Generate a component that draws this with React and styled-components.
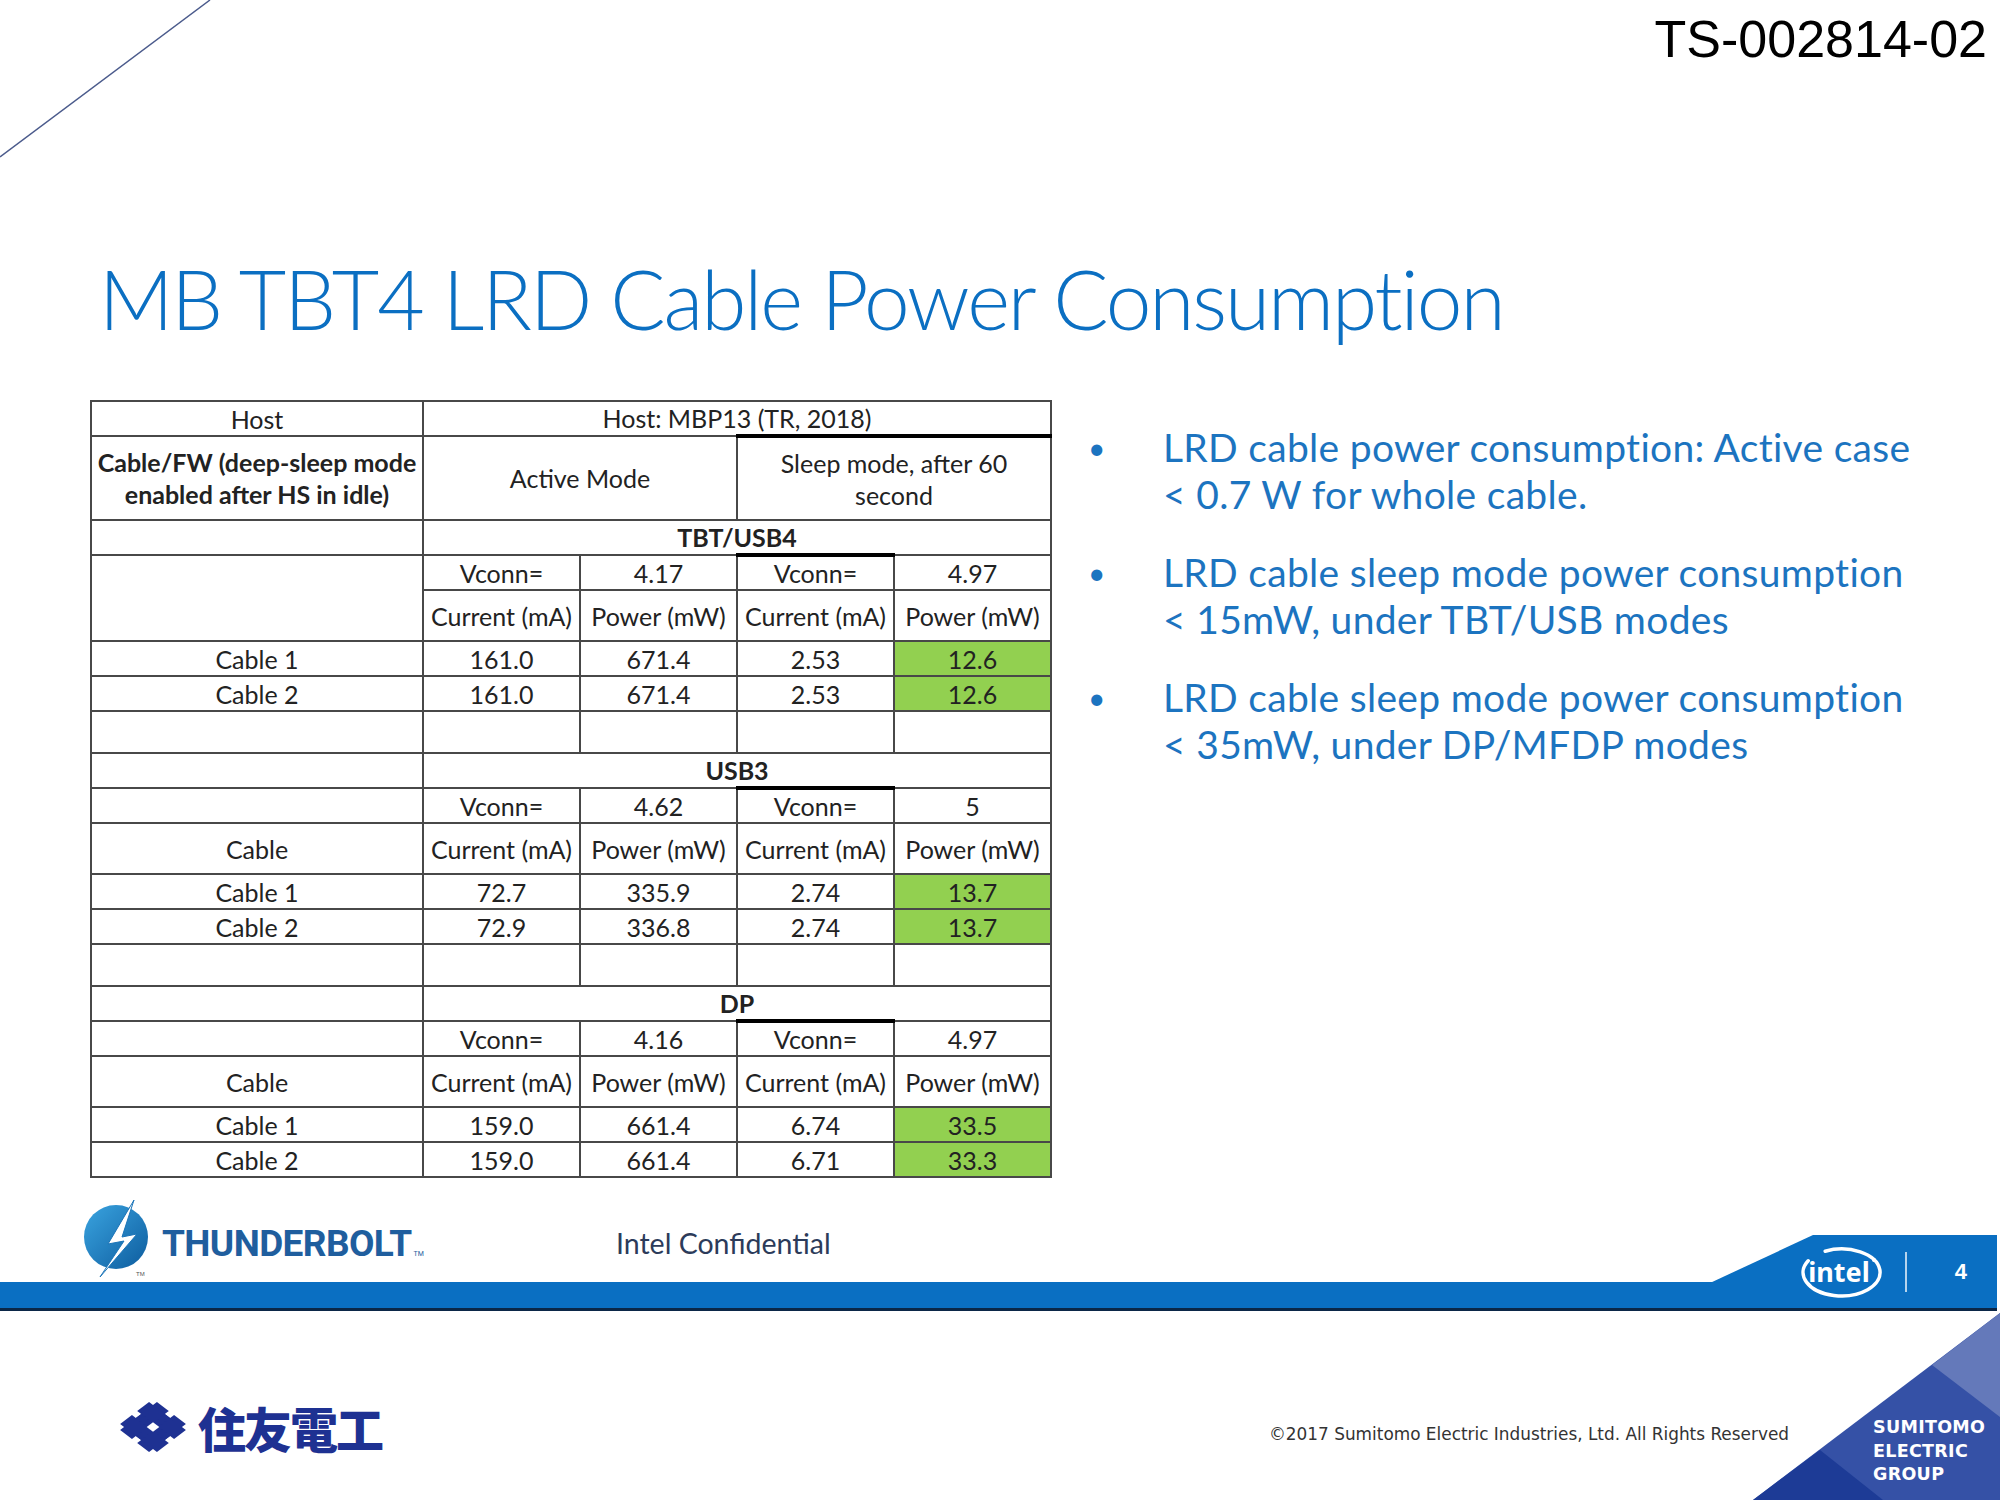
import React from 'react';
import styled, { createGlobalStyle } from 'styled-components';

const GlobalStyle = createGlobalStyle`
  html, body {
    margin: 0;
    padding: 0;
    background: #fff;
  }
`;

const Slide = styled.div`
  width: 2000px;
  height: 1500px;
  position: relative;
  overflow: hidden;
  background: #fff;
  display: flex;
  flex-direction: column;
  font-family: Lato, 'Noto Sans', sans-serif;
`;

const CornerLine = styled.svg`
  position: absolute;
  top: 0;
  left: 0;
`;

const DocNumber = styled.div`
  align-self: flex-end;
  margin: 13px 13px 0 0;
  font-family: 'Liberation Sans', Arial, sans-serif;
  font-size: 52px;
  line-height: 1;
  color: #000;
`;

const Title = styled.h1`
  margin: 192px 0 0 99px;
  font-family: Lato, sans-serif;
  font-weight: 300;
  font-size: 82px;
  letter-spacing: -2.1px;
  font-variant-ligatures: none;
  line-height: 1;
  color: #0b6fc2;
  white-space: nowrap;
`;

const Main = styled.main`
  display: flex;
  align-items: flex-start;
  gap: 36px;
  margin-top: 61px;
  padding-left: 90px;
`;

const Table = styled.table`
  border-collapse: collapse;
  table-layout: fixed;
  width: 960px;
  font-family: Lato, sans-serif;
  font-size: 25px;
  color: #222;
`;

const Row = styled.tr`
  height: ${(p) => p.$h}px;
`;

const Cell = styled.td`
  border: 2px solid #484848;
  ${(p) => p.$thickTop && 'border-top: 4px solid #000;'}
  background: ${(p) => (p.$green ? '#92d050' : '#fff')};
  font-weight: ${(p) => (p.$bold ? 700 : 400)};
  text-align: center;
  vertical-align: middle;
  padding: 0;
  line-height: 32px;
  white-space: nowrap;
  overflow: hidden;
`;

const Bullets = styled.ul`
  list-style: none;
  margin: 0;
  padding: 24px 0 0;
  display: flex;
  flex-direction: column;
  gap: 32px;
`;

const Bullet = styled.li`
  display: flex;
  font-family: Lato, sans-serif;
  font-size: 39px;
  line-height: 46.5px;
  letter-spacing: 0.3px;
  color: #1c74c0;
`;

const Dot = styled.span`
  flex: 0 0 75px;
  font-size: 30px;
`;

const Lines = styled.span`
  display: flex;
  flex-direction: column;
  white-space: nowrap;
`;

const Footer = styled.footer`
  position: relative;
  height: 114px;
  margin-top: 20px;
  padding-left: 80px;
  display: flex;
  align-items: flex-start;

  &::before {
    content: '';
    position: absolute;
    left: 0;
    right: 3px;
    top: 84px;
    height: 26px;
    background: #0a6fc2;
    border-bottom: 3px solid #0b2747;
  }

  &::after {
    content: '';
    position: absolute;
    right: 3px;
    top: 37px;
    width: 287px;
    height: 48px;
    background: #0a6fc2;
    clip-path: polygon(0 100%, 103px 0, 100% 0, 100% 100%);
  }
`;

const Brand = styled.div`
  flex: 0 0 536px;
  display: flex;
  align-items: center;
  gap: 10px;
`;

const BrandName = styled.span`
  margin-top: 8px;
  font-family: Roboto, 'Liberation Sans', sans-serif;
  font-weight: 700;
  font-size: 37px;
  letter-spacing: -0.6px;
  color: #1f5e9e;

  sup {
    font-size: 7px;
    font-weight: 400;
    letter-spacing: 0;
    vertical-align: baseline;
    margin-left: 2px;
  }
`;

const Confidential = styled.span`
  margin-top: 31px;
  font-family: Lato, sans-serif;
  font-size: 28.5px;
  line-height: 1;
  color: #2c3b5a;
`;

const IntelGroup = styled.div`
  position: relative;
  z-index: 1;
  margin: 41px 0 0 auto;
  padding-right: 33px;
  height: 65px;
  display: flex;
  align-items: center;
`;

const Divider = styled.span`
  width: 2px;
  height: 40px;
  margin-left: 15px;
  background: rgba(255, 255, 255, 0.7);
`;

const PageNum = styled.span`
  margin-left: 48px;
  font-family: 'Liberation Sans', Arial, sans-serif;
  font-weight: 700;
  font-size: 22px;
  color: #fff;
`;

const Bottom = styled.section`
  position: relative;
  flex: 1;
  display: flex;
  align-items: flex-start;
`;

const SumitomoLogo = styled.div`
  display: flex;
  align-items: center;
  gap: 12px;
  margin: 88px 0 0 120px;
`;

const SumitomoName = styled.span`
  font-family: 'Noto Sans CJK JP', 'Noto Sans CJK SC', sans-serif;
  font-weight: 900;
  font-size: 48px;
  line-height: 54px;
  letter-spacing: -2px;
  color: #1e3192;
`;

const Copyright = styled.span`
  margin: 112px 211px 0 auto;
  font-family: 'DejaVu Sans', Verdana, sans-serif;
  font-size: 16.9px;
  line-height: 20px;
  color: #333;
`;

const GroupBadge = styled.div`
  position: absolute;
  right: 0;
  bottom: 0;
  width: 247px;
  height: 187px;
  box-sizing: border-box;
  padding: 103px 0 0 120px;
  display: flex;
  flex-direction: column;
  font-family: 'DejaVu Sans', Verdana, sans-serif;
  font-weight: 700;
  font-size: 17.5px;
  line-height: 23.5px;
  color: #fff;
  letter-spacing: 0.3px;

  svg {
    position: absolute;
    inset: 0;
    z-index: 0;
  }

  span {
    position: relative;
  }
`;

const sections = [
  {
    name: 'TBT/USB4',
    vconn: ['4.17', '4.97'],
    label: null,
    rows: [
      ['Cable 1', '161.0', '671.4', '2.53', '12.6'],
      ['Cable 2', '161.0', '671.4', '2.53', '12.6'],
    ],
    spacer: true,
  },
  {
    name: 'USB3',
    vconn: ['4.62', '5'],
    label: 'Cable',
    rows: [
      ['Cable 1', '72.7', '335.9', '2.74', '13.7'],
      ['Cable 2', '72.9', '336.8', '2.74', '13.7'],
    ],
    spacer: true,
  },
  {
    name: 'DP',
    vconn: ['4.16', '4.97'],
    label: 'Cable',
    rows: [
      ['Cable 1', '159.0', '661.4', '6.74', '33.5'],
      ['Cable 2', '159.0', '661.4', '6.71', '33.3'],
    ],
    spacer: false,
  },
];

const bullets = [
  ['LRD cable power consumption: Active case', '< 0.7 W for whole cable.'],
  ['LRD cable sleep mode power consumption', '< 15mW, under TBT/USB modes'],
  ['LRD cable sleep mode power consumption', '< 35mW, under DP/MFDP modes'],
];

const Section = ({ s }) => (
  <>
    <Row $h={34}>
      <Cell />
      <Cell colSpan={4} $bold>{s.name}</Cell>
    </Row>
    <Row $h={35}>
      {s.label ? <Cell /> : <Cell rowSpan={2} />}
      <Cell>Vconn=</Cell>
      <Cell>{s.vconn[0]}</Cell>
      <Cell $thickTop>Vconn=</Cell>
      <Cell>{s.vconn[1]}</Cell>
    </Row>
    <Row $h={51}>
      {s.label && <Cell>{s.label}</Cell>}
      <Cell>Current (mA)</Cell>
      <Cell>Power (mW)</Cell>
      <Cell>Current (mA)</Cell>
      <Cell>Power (mW)</Cell>
    </Row>
    {s.rows.map((r) => (
      <Row $h={35} key={r[0]}>
        {r.map((v, i) => (
          <Cell key={i} $green={i === 4}>{v}</Cell>
        ))}
      </Row>
    ))}
    {s.spacer && (
      <Row $h={42}>
        <Cell />
        <Cell />
        <Cell />
        <Cell />
        <Cell />
      </Row>
    )}
  </>
);

const ThunderboltIcon = () => (
  <svg width="72" height="82" viewBox="0 0 72 82">
    <defs>
      <linearGradient id="tbg" x1="0" y1="0" x2="1" y2="1">
        <stop offset="0" stopColor="#3aa4e0" />
        <stop offset="1" stopColor="#0d5c9e" />
      </linearGradient>
    </defs>
    <circle cx="36" cy="39" r="32" fill="url(#tbg)" />
    <polygon
      points="54,2 28,46 44,43 20,79 57,36 42,39"
      fill="#fff"
      stroke="#1b74b8"
      strokeWidth="1"
    />
    <text x="56" y="78" fontSize="6" fill="#555" fontFamily="Liberation Sans">TM</text>
  </svg>
);

const IntelLogo = () => (
  <svg width="100" height="65" viewBox="0 0 100 65">
    <path
      d="M 35.2 12.2 A 38.5 23.5 0 1 1 18.2 21.75"
      fill="none"
      stroke="#fff"
      strokeWidth="3.5"
      strokeLinecap="round"
    />
    <text
      x="49"
      y="43"
      textAnchor="middle"
      fontFamily="'Noto Sans', sans-serif"
      fontWeight="700"
      fontSize="27"
      fill="#fff"
    >
      intel
    </text>
    <circle cx="84" cy="21" r="2" fill="#fff" />
  </svg>
);

const SumitomoMark = () => (
  <svg width="66" height="50" viewBox="-33 -25 66 50">
    <g transform="scale(1.86 1.41) rotate(45)" fill="#1e3192">
      <rect x="-11" y="-14" width="9" height="28" />
      <rect x="2" y="-14" width="9" height="28" />
      <rect x="-14" y="-11" width="28" height="9" />
      <rect x="-14" y="2" width="28" height="9" />
      <rect x="-2" y="-11" width="4" height="22" />
      <rect x="-11" y="-2" width="22" height="4" />
      <rect x="-2.4" y="-2.4" width="4.8" height="4.8" fill="#fff" />
    </g>
  </svg>
);

const App = () => (
  <>
    <GlobalStyle />
    <Slide>
      <CornerLine width="212" height="160" viewBox="0 0 212 160">
        <line x1="0" y1="157" x2="210" y2="0" stroke="#4b5b8c" strokeWidth="1.5" />
      </CornerLine>

      <DocNumber>TS-002814-02</DocNumber>
      <Title>MB TBT4 LRD Cable Power Consumption</Title>

      <Main>
        <Table>
          <colgroup>
            <col style={{ width: 332 }} />
            <col style={{ width: 157 }} />
            <col style={{ width: 157 }} />
            <col style={{ width: 157 }} />
            <col style={{ width: 157 }} />
          </colgroup>
          <tbody>
            <Row $h={35}>
              <Cell>Host</Cell>
              <Cell colSpan={4}>Host: MBP13 (TR, 2018)</Cell>
            </Row>
            <Row $h={84}>
              <Cell $bold>
                Cable/FW (deep-sleep mode
                <br />
                enabled after HS in idle)
              </Cell>
              <Cell colSpan={2}>Active Mode</Cell>
              <Cell colSpan={2} $thickTop>
                Sleep mode, after 60
                <br />
                second
              </Cell>
            </Row>
            {sections.map((s) => (
              <Section s={s} key={s.name} />
            ))}
          </tbody>
        </Table>

        <Bullets>
          {bullets.map((b, i) => (
            <Bullet key={i}>
              <Dot>•</Dot>
              <Lines>
                {b.map((line) => (
                  <span key={line}>{line}</span>
                ))}
              </Lines>
            </Bullet>
          ))}
        </Bullets>
      </Main>

      <Footer>
        <Brand>
          <ThunderboltIcon />
          <BrandName>
            THUNDERBOLT<sup>TM</sup>
          </BrandName>
        </Brand>
        <Confidential>Intel Confidential</Confidential>
        <IntelGroup>
          <IntelLogo />
          <Divider />
          <PageNum>4</PageNum>
        </IntelGroup>
      </Footer>

      <Bottom>
        <SumitomoLogo>
          <SumitomoMark />
          <SumitomoName>住友電工</SumitomoName>
        </SumitomoLogo>
        <Copyright>©2017 Sumitomo Electric Industries, Ltd. All Rights Reserved</Copyright>
        <GroupBadge>
          <svg width="247" height="187" viewBox="0 0 247 187">
            <polygon points="0,187 247,0 247,187" fill="#3551a6" />
            <polygon points="247,0 179,52 247,104" fill="#6479ba" />
            <polygon points="0,187 67,137 130,187" fill="#1d3b96" />
          </svg>
          <span>SUMITOMO</span>
          <span>ELECTRIC</span>
          <span>GROUP</span>
        </GroupBadge>
      </Bottom>
    </Slide>
  </>
);

export default App;
